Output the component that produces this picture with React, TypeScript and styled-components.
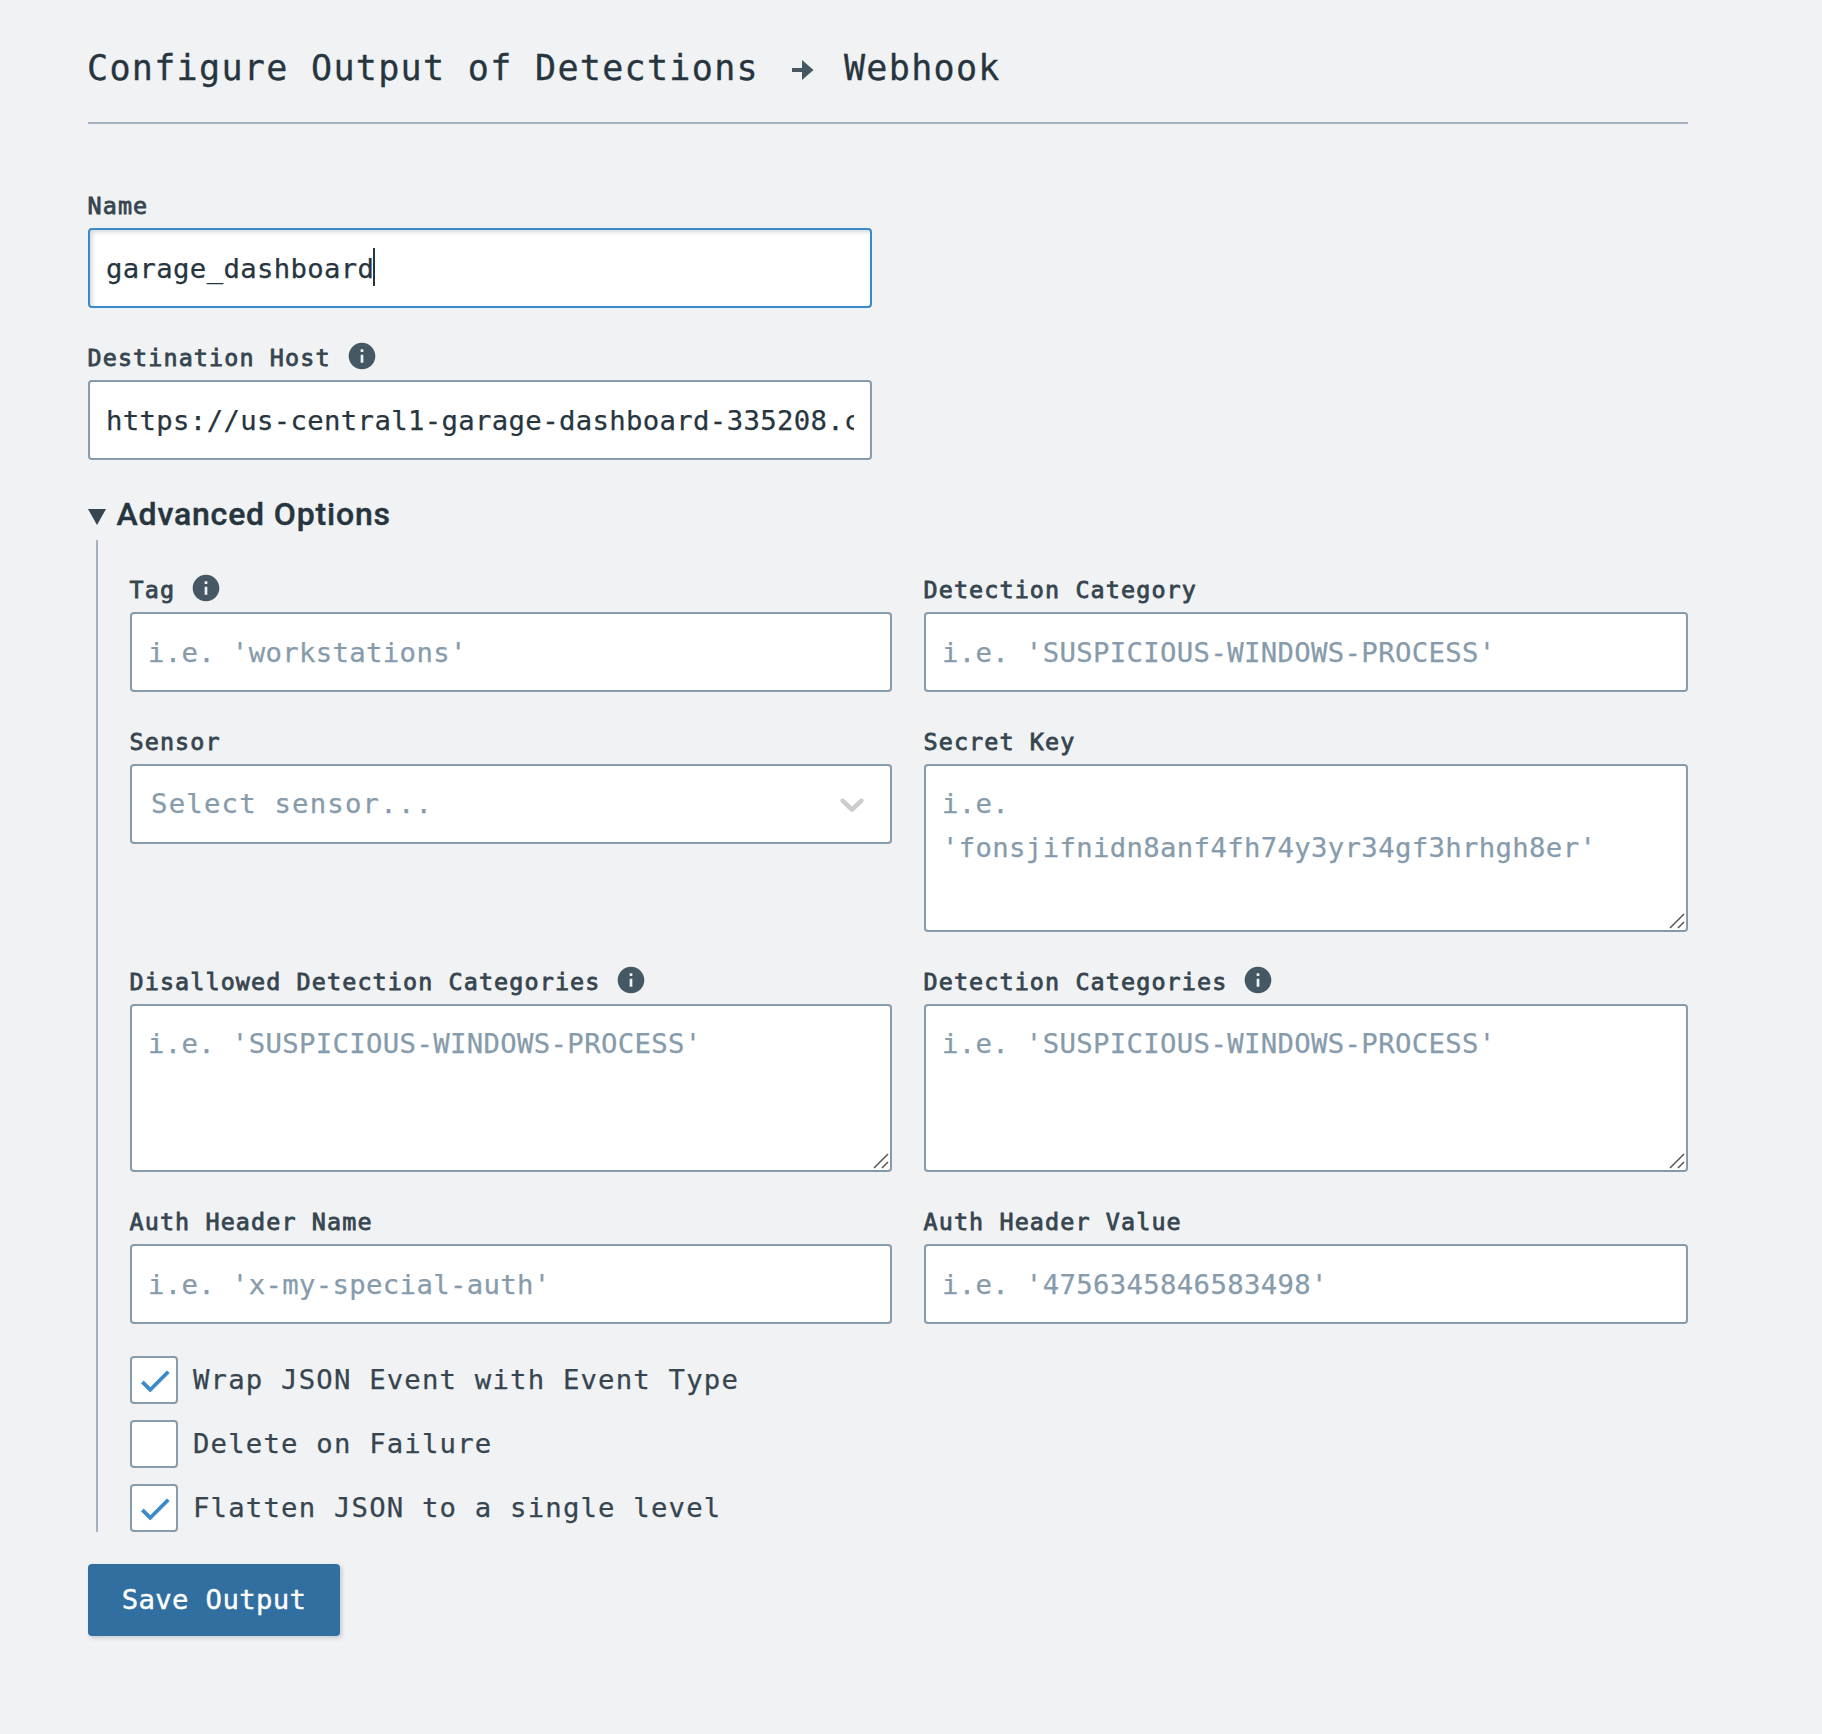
import React from "react";
import styled, { createGlobalStyle } from "styled-components";

const color = {
  page: "#f0f2f4",
  ink: "#27353f",
  label: "#36454f",
  icon: "#455864",
  border: "#869bab",
  placeholder: "#869bab",
  rule: "#a3b1c1",
  blue: "#3a8ac9",
  button: "#306fa0",
};

const mono = `"DejaVu Sans Mono", "Liberation Mono", monospace`;

const GlobalStyle = createGlobalStyle`
  * { box-sizing: border-box; }
  body {
    margin: 0;
    background: ${color.page};
    color: ${color.ink};
    font-family: ${mono};
  }
`;

const Page = styled.main`
  width: 1688px;
  padding: 0 0 90px 88px;
`;

const Header = styled.header`
  display: flex;
  align-items: center;
  height: 124px;
  padding-top: 13px;
  border-bottom: 2px solid ${color.rule};
`;

const Title = styled.h1`
  display: flex;
  align-items: center;
  margin: 0 0 0 -1px;
  font-size: 35.1px;
  font-weight: 400;
  line-height: 44px;
  letter-spacing: 1.28px;
  -webkit-text-stroke: 0.3px ${color.ink};
  white-space: pre;
`;

const TitleArrow = styled.svg`
  width: 22px;
  height: 20px;
  margin: 4px 30px 0 33px;
  fill: ${color.icon};
`;

const Form = styled.form`
  padding-top: 64px;
`;

const Field = styled.div<{ $width?: number }>`
  width: ${(p) => (p.$width ? `${p.$width}px` : "auto")};
  margin-bottom: 32px;
`;

const LabelRow = styled.div`
  display: flex;
  align-items: center;
  gap: 15px;
  height: 40px;
  margin-left: -0.5px;
  padding-bottom: 5px;
`;

const Label = styled.label`
  color: ${color.label};
  font-size: 23.4px;
  line-height: 32px;
  letter-spacing: 1.11px;
  -webkit-text-stroke: 0.8px ${color.label};
  white-space: nowrap;
`;

const InfoSvg = styled.svg`
  display: block;
  width: 32px;
  height: 32px;
  margin-top: -3px;
  fill: ${color.icon};
`;

const controlStyle = `
  display: block;
  width: 100%;
  margin: 0;
  border: 2px solid ${color.border};
  border-radius: 4px;
  background: #fff;
  color: ${color.ink};
  font-family: ${mono};
  font-size: 27.3px;
  line-height: 44px;
  letter-spacing: 0.34px;
  -webkit-text-stroke: 0.25px currentColor;
  outline: none;
  &::placeholder { color: ${color.placeholder}; opacity: 1; -webkit-text-stroke: 0.25px ${color.placeholder}; }
`;

const TextInput = styled.input`
  ${controlStyle}
  height: 80px;
  padding: 16px;
`;

const FocusedInput = styled.div`
  ${controlStyle}
  display: flex;
  align-items: center;
  height: 80px;
  padding: 17px 16px 15px;
  border-color: ${color.blue};
  box-shadow: inset 2px 2px 4px rgba(39, 53, 63, 0.2);
`;

const Caret = styled.span`
  width: 2px;
  height: 38px;
  margin: -4px 0 0 -1px;
  background: ${color.ink};
`;

const AreaWrap = styled.div`
  position: relative;
`;

const TextArea = styled.textarea`
  ${controlStyle}
  height: 168px;
  padding: 16px;
  resize: none;
  overflow: hidden;
`;

const ResizeGrip = styled.svg`
  position: absolute;
  right: 3px;
  bottom: 3px;
  width: 16px;
  height: 16px;
  stroke: #555;
  stroke-width: 1.5;
  fill: none;
`;

const SelectBox = styled.div`
  ${controlStyle}
  display: flex;
  align-items: center;
  justify-content: space-between;
  height: 80px;
  padding: 0 18px 0 19px;
  color: ${color.placeholder};
  letter-spacing: 1.2px;
`;

const Chevron = styled.svg`
  width: 40px;
  height: 40px;
  fill: #cccccc;
`;

const Summary = styled.div`
  display: flex;
  align-items: center;
  gap: 11px;
  height: 48px;
  padding-bottom: 3px;
  font-family: Roboto, sans-serif;
  font-size: 32px;
  font-weight: 500;
  line-height: 45px;
  letter-spacing: 0.83px;
  -webkit-text-stroke: 0.4px ${color.ink};
`;

const Triangle = styled.svg`
  width: 18px;
  height: 16px;
  margin: 4px 0 0 -0.5px;
  fill: ${color.label};
`;

const Advanced = styled.section`
  margin: 0 0 32px 8px;
  padding: 32px 0 0 32px;
  border-left: 2px solid ${color.rule};
`;

const Grid = styled.div`
  display: grid;
  grid-template-columns: 762px 764px;
  column-gap: 32px;
`;

const Checks = styled.div`
  display: flex;
  flex-direction: column;
  gap: 16px;
`;

const CheckRow = styled.label`
  display: flex;
  align-items: center;
  gap: 15px;
  height: 48px;
  color: ${color.label};
  font-size: 27.3px;
  line-height: 44px;
  letter-spacing: 1.18px;
  -webkit-text-stroke: 0.25px ${color.label};
`;

const CheckBox = styled.span`
  display: flex;
  align-items: center;
  justify-content: center;
  width: 48px;
  height: 48px;
  border: 2px solid ${color.border};
  border-radius: 4px;
  background: #fff;
`;

const CheckSvg = styled.svg`
  flex: none;
  width: 38px;
  height: 38px;
  margin: 2px 0 0 1px;
  fill: ${color.blue};
  stroke: ${color.blue};
  stroke-width: 0.5;
`;

const SaveButton = styled.button`
  display: block;
  width: 252px;
  height: 72px;
  padding: 0;
  border: 0;
  border-radius: 4px;
  background: ${color.button};
  box-shadow: 2px 2px 4px rgba(39, 53, 63, 0.2);
  color: #fff;
  font-family: ${mono};
  font-size: 27.3px;
  line-height: 44px;
  letter-spacing: 0.34px;
  -webkit-text-stroke: 0.4px #fff;
`;

const InfoIcon = () => (
  <InfoSvg viewBox="0 0 24 24">
    <path d="M12 2C6.48 2 2 6.48 2 12s4.48 10 10 10 10-4.48 10-10S17.52 2 12 2zm1 15h-2v-6h2v6zm0-8h-2V7h2v2z" />
  </InfoSvg>
);

type FieldProps = {
  label: string;
  info?: boolean;
  width?: number;
  children: React.ReactNode;
};

const FormField = ({ label, info, width, children }: FieldProps) => (
  <Field $width={width}>
    <LabelRow>
      <Label>{label}</Label>
      {info && <InfoIcon />}
    </LabelRow>
    {children}
  </Field>
);

const Area = ({ placeholder }: { placeholder: string }) => (
  <AreaWrap>
    <TextArea placeholder={placeholder} spellCheck={false} />
    <ResizeGrip viewBox="0 0 16 16">
      <path d="M1 15L15 1M9 15L15 9" />
    </ResizeGrip>
  </AreaWrap>
);

const options = [
  { text: "Wrap JSON Event with Event Type", checked: true },
  { text: "Delete on Failure", checked: false },
  { text: "Flatten JSON to a single level", checked: true },
];

export default function App() {
  return (
    <>
      <GlobalStyle />
      <Page>
        <Header>
          <Title>
            <span>Configure Output of Detections</span>
            <TitleArrow viewBox="0 0 22 20">
              <path d="M0 8h10V0l11.5 10L10 20v-8H0z" />
            </TitleArrow>
            <span>Webhook</span>
          </Title>
        </Header>
        <Form>
          <FormField label="Name" width={784}>
            <FocusedInput>
              <span>garage_dashboard</span>
              <Caret />
            </FocusedInput>
          </FormField>
          <FormField label="Destination Host" info width={784}>
            <TextInput defaultValue="https://us-central1-garage-dashboard-335208.c" spellCheck={false} />
          </FormField>
          <Summary>
            <Triangle viewBox="0 0 18 16">
              <path d="M0 0h18L9 16z" />
            </Triangle>
            <span>Advanced Options</span>
          </Summary>
          <Advanced>
            <Grid>
              <FormField label="Tag" info>
                <TextInput placeholder="i.e. 'workstations'" />
              </FormField>
              <FormField label="Detection Category">
                <TextInput placeholder="i.e. 'SUSPICIOUS-WINDOWS-PROCESS'" />
              </FormField>
              <FormField label="Sensor">
                <SelectBox>
                  <span>Select sensor...</span>
                  <Chevron viewBox="0 0 20 20">
                    <path d="M4.516 7.548c0.436-0.446 1.043-0.481 1.576 0l3.908 3.747 3.908-3.747c0.533-0.481 1.141-0.446 1.574 0 0.436 0.445 0.408 1.197 0 1.615-0.406 0.418-4.695 4.502-4.695 4.502-0.217 0.223-0.502 0.335-0.787 0.335s-0.57-0.112-0.789-0.335c0 0-4.287-4.084-4.695-4.502s-0.436-1.17 0-1.615z" />
                  </Chevron>
                </SelectBox>
              </FormField>
              <FormField label="Secret Key">
                <Area placeholder="i.e. 'fonsjifnidn8anf4fh74y3yr34gf3hrhgh8er'" />
              </FormField>
              <FormField label="Disallowed Detection Categories" info>
                <Area placeholder="i.e. 'SUSPICIOUS-WINDOWS-PROCESS'" />
              </FormField>
              <FormField label="Detection Categories" info>
                <Area placeholder="i.e. 'SUSPICIOUS-WINDOWS-PROCESS'" />
              </FormField>
              <FormField label="Auth Header Name">
                <TextInput placeholder="i.e. 'x-my-special-auth'" />
              </FormField>
              <FormField label="Auth Header Value">
                <TextInput placeholder="i.e. '4756345846583498'" />
              </FormField>
            </Grid>
            <Checks>
              {options.map((o) => (
                <CheckRow key={o.text}>
                  <CheckBox>
                    {o.checked && (
                      <CheckSvg viewBox="0 0 24 24">
                        <path d="M9 16.17L4.83 12l-1.42 1.41L9 19 21 7l-1.41-1.41z" />
                      </CheckSvg>
                    )}
                  </CheckBox>
                  <span>{o.text}</span>
                </CheckRow>
              ))}
            </Checks>
          </Advanced>
          <SaveButton type="button">Save Output</SaveButton>
        </Form>
      </Page>
    </>
  );
}
